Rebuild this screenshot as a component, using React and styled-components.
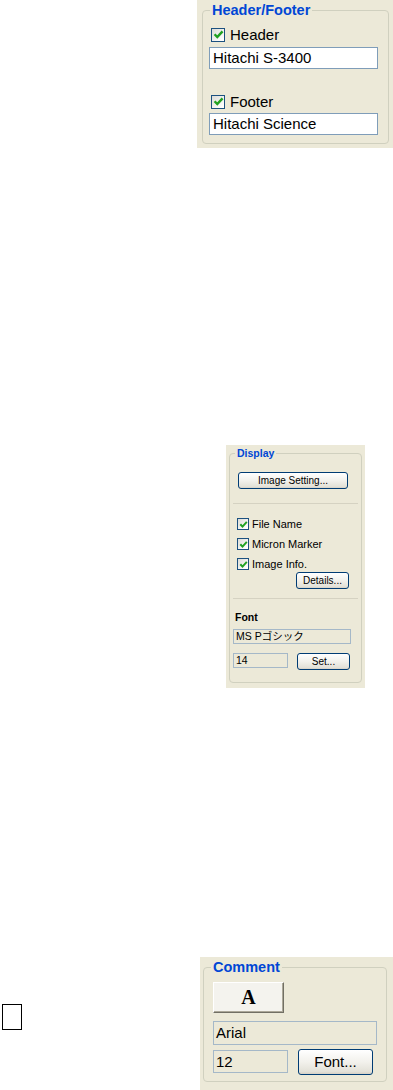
import React from "react";
import styled, { createGlobalStyle } from "styled-components";

const GlobalStyle = createGlobalStyle`
  html, body {
    margin: 0;
    padding: 0;
    background: #fff;
  }
  body {
    font-family: "Liberation Sans", Arial, "Noto Sans CJK JP", sans-serif;
    color: #000;
  }
`;

function CheckMark({ size }) {
  return (
    <svg width={size - 3} height={size - 3} viewBox="0 0 9 9">
      <path d="M1.3 4.3 L3.5 6.6 L7.8 1.9" fill="none" stroke="#21a121" strokeWidth="2" />
    </svg>
  );
}

function Check({ label, size, font }) {
  return (
    <StCheckRow $font={font}>
      <StBox $size={size}>
        <CheckMark size={size} />
      </StBox>
      <span>{label}</span>
    </StCheckRow>
  );
}

export default function App() {
  return (
    <>
      <GlobalStyle />
      <StPage>
        {/* 헤더/푸터 */}
        <StPanel $left={197} $width={196} $height={148}>
          <StGroup $mx="0 4px 0 5px" $pad={6} $height={144}>
            <StLegend $size={14.5}>Header/Footer</StLegend>
            <StBody $top={6} $left={2}>
              <Check label="Header" size={14} font={15} />
            </StBody>
            <StField $top={4} $left={0}>Hitachi S-3400</StField>
            <StBody $top={24} $left={2}>
              <Check label="Footer" size={14} font={15} />
            </StBody>
            <StField $top={3} $left={0}>Hitachi Science</StField>
          </StGroup>
        </StPanel>

        {/* 표시 */}
        <StPanel $left={226} $width={139} $height={243} $top={297}>
          <StGroup $mx="0 3px 0 3px" $pad={4} $height={238}>
            <StLegend $size={10.5} $line={16}>Display</StLegend>
            <StXpButton $w={110} $h={17} $top={11} $left={4}>
              Image Setting...
            </StXpButton>
            <StSep $top={14} />
            <StSmallChecks>
              <Check label="File Name" size={12} font={11} />
              <Check label="Micron Marker" size={12} font={11} />
              <Check label="Image Info." size={12} font={11} />
            </StSmallChecks>
            <StXpButton $w={53} $h={17} $top={0} $left={62}>
              Details...
            </StXpButton>
            <StSep $top={9} />
            <StLabel>Font</StLabel>
            <StReadBox $w={118} $h={15} $top={5} $left={-1} $font={10.5}>
              MS Pゴシック
            </StReadBox>
            <StRow $top={9} $gap={9} $left={-1}>
              <StReadBox $w={55} $h={15} $font={10.5}>14</StReadBox>
              <StXpButton $w={53} $h={17}>Set...</StXpButton>
            </StRow>
          </StGroup>
        </StPanel>

        <StBottom>
          <StEmptyBox />
          {/* 코멘트 */}
          <StPanel $left={178} $width={193} $height={133}>
            <StGroup $mx="0 6px 0 3px" $pad={6} $height={125}>
              <StLegend $size={14.5}>Comment</StLegend>
              <StFontButton>A</StFontButton>
              <StReadBox $w={164} $h={24} $top={8} $left={3} $font={15}>
                Arial
              </StReadBox>
              <StRow $top={5} $gap={10} $left={3}>
                <StReadBox $w={75} $h={23} $font={15}>12</StReadBox>
                <StXpButton $w={75} $h={26} $font={15} $top={-1}>
                  Font...
                </StXpButton>
              </StRow>
            </StGroup>
          </StPanel>
        </StBottom>
      </StPage>
    </>
  );
}

const StPage = styled.div`
  display: flex;
  flex-direction: column;
  width: 393px;
  min-height: 1090px;
`;

const StPanel = styled.div`
  width: ${(p) => p.$width}px;
  height: ${(p) => p.$height}px;
  margin-left: ${(p) => p.$left}px;
  margin-top: ${(p) => p.$top || 0}px;
  background-color: #ece9d8;
  box-sizing: border-box;
  overflow: hidden;
  flex-shrink: 0;
`;

const StGroup = styled.fieldset`
  margin: ${(p) => p.$mx};
  padding: 0 ${(p) => p.$pad}px;
  height: ${(p) => p.$height}px;
  box-sizing: border-box;
  border: 1px solid #d0d0bf;
  border-radius: 4px;
  display: flex;
  flex-direction: column;
  align-items: flex-start;
  min-width: 0;
`;

const StLegend = styled.legend`
  padding: 0 2px;
  margin-left: 1px;
  font-family: "Liberation Sans", Arial, sans-serif;
  font-weight: bold;
  font-size: ${(p) => p.$size}px;
  line-height: ${(p) => p.$line || 20}px;
  color: #0046d5;
`;

const StBody = styled.div`
  margin-top: ${(p) => p.$top}px;
  margin-left: ${(p) => p.$left}px;
`;

const StCheckRow = styled.label`
  display: flex;
  align-items: center;
  gap: ${(p) => (p.$font > 12 ? 5 : 3)}px;
  height: ${(p) => (p.$font > 12 ? 17 : 16)}px;
  font-size: ${(p) => p.$font}px;
  color: #000;
`;

const StBox = styled.span`
  width: ${(p) => p.$size}px;
  height: ${(p) => p.$size}px;
  box-sizing: border-box;
  border: 1px solid #1c5180;
  background: linear-gradient(135deg, #dcdcd7 0%, #ffffff 90%);
  display: flex;
  align-items: center;
  justify-content: center;
  flex-shrink: 0;
`;

const StField = styled.div`
  margin-top: ${(p) => p.$top}px;
  margin-left: ${(p) => p.$left}px;
  width: 169px;
  height: 22px;
  box-sizing: border-box;
  border: 1px solid #7f9db9;
  background: #fff;
  font-size: 15px;
  line-height: 20px;
  padding-left: 3px;
  white-space: nowrap;
`;

const StXpButton = styled.div`
  width: ${(p) => p.$w}px;
  height: ${(p) => p.$h}px;
  margin-top: ${(p) => p.$top || 0}px;
  margin-left: ${(p) => p.$left || 0}px;
  box-sizing: border-box;
  border: 1px solid #003c74;
  border-radius: 3px;
  background: linear-gradient(#ffffff 0%, #f2f1ec 50%, #e3e1d8 90%, #d6d0c5 100%);
  font-size: ${(p) => p.$font || 10}px;
  line-height: ${(p) => p.$h - 2}px;
  text-align: center;
  white-space: nowrap;
  flex-shrink: 0;
`;

const StSep = styled.div`
  margin-top: ${(p) => p.$top}px;
  margin-left: -1px;
  width: 125px;
  height: 1px;
  background: #d5d2c2;
`;

const StSmallChecks = styled.div`
  margin-top: 12px;
  margin-left: 3px;
  display: flex;
  flex-direction: column;
  gap: 4px;
`;

const StLabel = styled.div`
  margin-top: 11px;
  margin-left: 1px;
  font-size: 10.5px;
  font-weight: bold;
  line-height: 14px;
`;

const StReadBox = styled.div`
  width: ${(p) => p.$w}px;
  height: ${(p) => p.$h}px;
  margin-top: ${(p) => p.$top || 0}px;
  margin-left: ${(p) => p.$left || 0}px;
  box-sizing: border-box;
  border: 1px solid #a5b8c8;
  background: #ece9d8;
  font-size: ${(p) => p.$font}px;
  line-height: ${(p) => p.$h - 2}px;
  padding-left: 2px;
  white-space: nowrap;
  font-family: "Liberation Sans", Arial, "Noto Sans CJK JP", sans-serif;
  flex-shrink: 0;
`;

const StRow = styled.div`
  display: flex;
  align-items: flex-start;
  gap: ${(p) => p.$gap}px;
  margin-top: ${(p) => p.$top}px;
  margin-left: ${(p) => p.$left}px;
`;

const StFontButton = styled.div`
  margin-top: 5px;
  margin-left: 3px;
  width: 71px;
  height: 31px;
  box-sizing: border-box;
  border: 1px solid;
  border-color: #ffffff #716f64 #716f64 #ffffff;
  box-shadow: inset -1px -1px 0 #aca899;
  background: #f4f3ee;
  font-family: "Liberation Serif", "Times New Roman", serif;
  font-weight: bold;
  font-size: 20px;
  line-height: 29px;
  text-align: center;
`;

const StBottom = styled.div`
  display: flex;
  align-items: flex-start;
  margin-top: 269px;
`;

const StEmptyBox = styled.div`
  margin-top: 47px;
  margin-left: 2px;
  width: 20px;
  height: 26px;
  box-sizing: border-box;
  border: 1px solid #000;
  flex-shrink: 0;
`;
